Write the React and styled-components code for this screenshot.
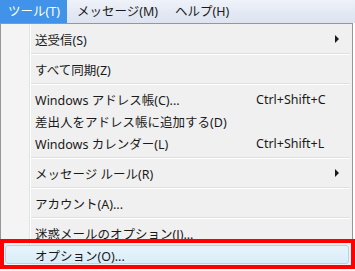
import React from 'react';
import styled, { createGlobalStyle, css } from 'styled-components';

const GlobalStyle = createGlobalStyle`
  html, body {
    margin: 0;
    padding: 0;
    background: #ffffff;
  }
  body {
    font-family: "Noto Sans", "Noto Sans CJK JP", sans-serif;
    font-size: 12.5px;
    color: #1a1a1a;
  }
`;

const Screen = styled.div`
  position: relative;
  width: 355px;
  height: 271px;
  overflow: hidden;
  background: #ffffff;
`;

const MenuBar = styled.div`
  display: flex;
  gap: 2px;
  height: 23px;
  background: linear-gradient(to bottom, #eef2f9 0%, #e2e8f3 60%, #dde4f0 100%);
`;

const BarItem = styled.div`
  display: flex;
  align-items: center;
  padding: 0 7px 0 8px;
  color: #1a1a1a;
  line-height: 23px;
  white-space: nowrap;

  ${props =>
    props.active &&
    css`
      background: #4193ea;
      color: #ffffff;
    `}
`;

const Dropdown = styled.div`
  width: 351px;
  border: 1px solid #979797;
  padding: 4px 0 0 0;
  background: linear-gradient(
    to right,
    #f4f4f4 0,
    #f4f4f4 28px,
    #e2e3e3 28px,
    #e2e3e3 29px,
    #ffffff 29px,
    #ffffff 30px,
    #f0f0f0 30px
  );
`;

const Item = styled.div`
  position: relative;
  display: flex;
  align-items: center;
  height: 22px;
  padding-left: 34px;
  white-space: nowrap;

  ${props =>
    props.hover &&
    css`
      &::before {
        content: '';
        position: absolute;
        left: 4px;
        right: 3px;
        top: 1px;
        bottom: 2px;
        border: 1px solid #a8d8eb;
        border-radius: 3px;
        background: linear-gradient(to bottom, #e8f4fb 0%, #d9edf8 100%);
      }
    `}
`;

const Label = styled.span`
  position: relative;
  flex: 1;
`;

const Trailing = styled.span`
  position: relative;
  display: flex;
  align-items: center;
  justify-content: ${props => (props.arrow ? 'flex-end' : 'flex-start')};
  width: 96px;
  padding-right: 13px;
  box-sizing: border-box;
`;

const Arrow = styled.span`
  width: 0;
  height: 0;
  border-top: 4px solid transparent;
  border-bottom: 4px solid transparent;
  border-left: 4px solid #1a1a1a;
`;

const Separator = styled.div`
  height: 8px;
  margin-left: 30px;
  margin-right: 2px;
  display: flex;
  flex-direction: column;
  justify-content: center;

  &::before {
    content: '';
    display: block;
    height: 1px;
    background: #e0e0e0;
  }
  &::after {
    content: '';
    display: block;
    height: 1px;
    background: #ffffff;
  }
`;

const Highlight = styled.div`
  position: absolute;
  left: 0;
  top: 239px;
  width: 355px;
  height: 30px;
  box-sizing: border-box;
  border: 4px solid #ff0000;
  pointer-events: none;
`;

const menu = [
  { label: '送受信(S)', arrow: true },
  'sep',
  { label: 'すべて同期(Z)' },
  'sep',
  { label: 'Windows アドレス帳(C)...', shortcut: 'Ctrl+Shift+C' },
  { label: '差出人をアドレス帳に追加する(D)' },
  { label: 'Windows カレンダー(L)', shortcut: 'Ctrl+Shift+L' },
  'sep',
  { label: 'メッセージ ルール(R)', arrow: true },
  'sep',
  { label: 'アカウント(A)...' },
  'sep',
  { label: '迷惑メールのオプション(J)...' },
  { label: 'オプション(O)...', hover: true },
];

const App = () => (
  <Screen>
    <GlobalStyle />
    <MenuBar>
      <BarItem active>ツール(T)</BarItem>
      <BarItem>メッセージ(M)</BarItem>
      <BarItem>ヘルプ(H)</BarItem>
    </MenuBar>
    <Dropdown>
      {menu.map((item, i) =>
        item === 'sep' ? (
          <Separator key={i} />
        ) : (
          <Item key={i} hover={item.hover}>
            <Label>{item.label}</Label>
            <Trailing arrow={item.arrow}>
              {item.arrow ? <Arrow /> : item.shortcut}
            </Trailing>
          </Item>
        )
      )}
    </Dropdown>
    <Highlight />
  </Screen>
);

export default App;
